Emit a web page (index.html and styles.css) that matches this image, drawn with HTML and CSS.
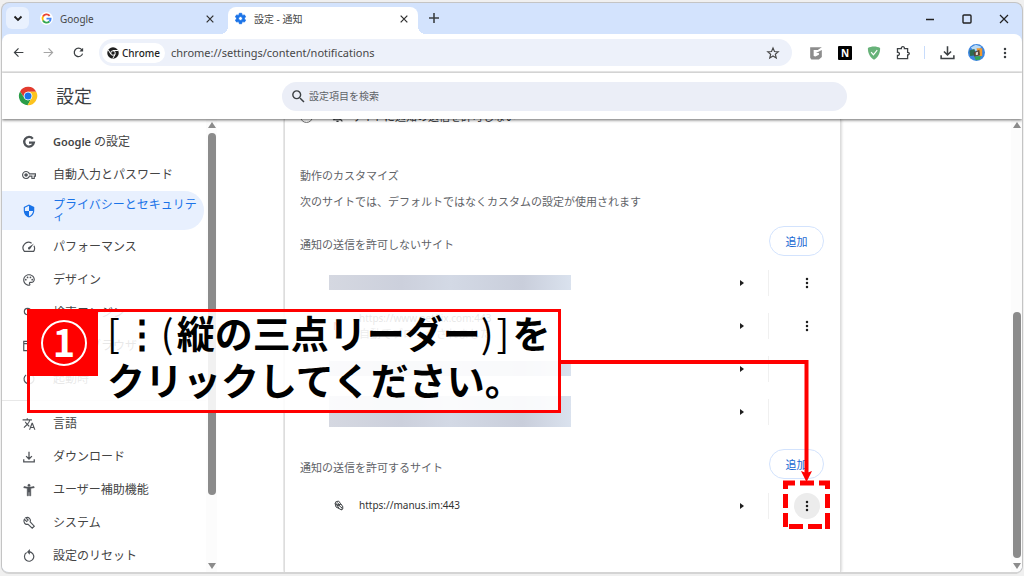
FILE: index.html
```html
<!DOCTYPE html>
<html lang="ja">
  <head>
    <meta charset="UTF-8" />
    <meta name="viewport" content="width=device-width, initial-scale=1.0" />
    <title>設定 - 通知</title>
    <link rel="stylesheet" href="styles.css">
  </head>
  <body>
    <!-- Shared icons -->
    <svg class="defs" aria-hidden="true">
      <symbol id="i-close" viewBox="0 0 12 12"><path d="M2 2l8 8M10 2l-8 8" fill="none" stroke="currentColor" stroke-width="1.5" /></symbol>
      <symbol id="i-search" viewBox="0 0 24 24"><path d="M15.5 14h-.79l-.28-.27A6.47 6.47 0 0 0 16 9.5 6.5 6.5 0 1 0 9.5 16c1.61 0 3.09-.59 4.23-1.57l.27.28v.79l5 4.99L20.49 19l-4.99-5zm-6 0C7.01 14 5 11.99 5 9.5S7.01 5 9.5 5 14 7.01 14 9.5 11.99 14 9.5 14z" /></symbol>
      <symbol id="i-download" viewBox="0 0 24 24"><path d="M12 3v12M7 10.500l5 5 5-5M3 16v4.500h18V16" fill="none" stroke="currentColor" stroke-width="2.200" /></symbol>
      <symbol id="i-dots" viewBox="0 0 24 24"><circle cx="12" cy="4" r="2.500" /><circle cx="12" cy="12" r="2.500" /><circle cx="12" cy="20" r="2.500" /></symbol>
      <symbol id="i-chrome-mono" viewBox="0 0 24 24"><circle cx="12" cy="12" r="11.500" /><circle cx="12" cy="12" r="4.500" fill="none" stroke="#fff" stroke-width="2" /><path d="M12 7h10M7.700 14.500L2.700 6M16.300 14.500L11.500 23" stroke="#fff" stroke-width="2" /></symbol>
    </svg>

    <div class="window">
      <!-- Tab strip -->
      <div class="tabstrip">
        <button class="tab-search" aria-label="タブを検索"><svg viewBox="0 0 12 12"><path d="M2.500 4.500L6 8l3.500-3.500" fill="none" stroke="currentColor" stroke-width="1.800" /></svg></button>
        <div class="tab">
          <svg class="favicon" viewBox="0 0 24 24"><circle cx="12" cy="12" r="12" fill="#fff" /><g fill="none" stroke-width="3.500"><path d="M17.800 7A7.500 7.500 0 0 0 5.500 8.300" stroke="#ea4335" /><path d="M5.500 8.300a7.500 7.500 0 0 0 0 7.400" stroke="#fbbc04" /><path d="M5.500 15.700a7.500 7.500 0 0 0 11.800 1.800" stroke="#34a853" /><path d="M17.300 17.500c1.500-1.400 2.200-3.200 2.200-5.200H12" stroke="#4285f4" /></g></svg>
          <span>Google</span>
          <button class="tab-close" aria-label="閉じる"><svg viewBox="0 0 12 12"><use href="#i-close" /></svg></button>
        </div>
        <div class="tab active">
          <svg class="favicon" viewBox="0 0 24 24"><path d="M19.140 12.940c.04-.3.060-.61.060-.94s-.02-.64-.07-.94l2.030-1.580a.49.49 0 0 0 .12-.61l-1.920-3.320a.49.49 0 0 0-.59-.22l-2.390.96c-.5-.38-1.030-.7-1.620-.94l-.36-2.540a.48.48 0 0 0-.48-.41h-3.840a.48.48 0 0 0-.47.41l-.36 2.540c-.59.24-1.130.57-1.620.94l-2.390-.96a.48.48 0 0 0-.59.22L2.740 8.870a.48.48 0 0 0 .12.610l2.030 1.580c-.05.3-.09.63-.09.94s.02.64.07.94l-2.030 1.580a.49.49 0 0 0-.12.610l1.920 3.320c.12.22.37.29.59.22l2.390-.96c.5.38 1.030.7 1.620.94l.36 2.540c.05.24.24.410.48.410h3.840c.24 0 .44-.17.47-.41l.36-2.540c.59-.24 1.130-.56 1.620-.94l2.390.96c.22.080.47 0 .59-.22l1.920-3.320a.48.48 0 0 0-.12-.61zM12 15.600a3.600 3.600 0 1 1 0-7.200 3.600 3.600 0 0 1 0 7.200z" fill="#1a73e8" stroke="#1a73e8" stroke-width="1.500" /></svg>
          <span>設定 - 通知</span>
          <button class="tab-close" aria-label="閉じる"><svg viewBox="0 0 12 12"><use href="#i-close" /></svg></button>
        </div>
        <button class="new-tab" aria-label="新しいタブ"><svg viewBox="0 0 12 12"><path d="M6 1v10M1 6h10" stroke="currentColor" stroke-width="1.600" /></svg></button>
        <div class="window-controls">
          <button aria-label="最小化"><svg viewBox="0 0 12 12"><path d="M2 6.500h8" stroke="currentColor" stroke-width="1.300" /></svg></button>
          <button aria-label="最大化"><svg viewBox="0 0 12 12"><rect x="2" y="2" width="8" height="8" rx="1" fill="none" stroke="currentColor" stroke-width="1.400" /></svg></button>
          <button aria-label="ウィンドウを閉じる"><svg viewBox="0 0 12 12"><path d="M2 2l8 8M10 2l-8 8" stroke="currentColor" stroke-width="1.200" /></svg></button>
        </div>
      </div>

      <!-- Toolbar -->
      <div class="toolbar">
        <div class="nav-buttons">
          <button aria-label="戻る"><svg viewBox="0 0 24 24"><path d="M21 12H5M12 4.500L4.500 12l7.500 7.500" fill="none" stroke="currentColor" stroke-width="2.200" /></svg></button>
          <button aria-label="進む" disabled><svg viewBox="0 0 24 24"><path d="M3 12h16M12 4.500l7.500 7.500-7.500 7.500" fill="none" stroke="currentColor" stroke-width="2.200" /></svg></button>
          <button aria-label="再読み込み"><svg viewBox="0 0 24 24"><path d="M19.500 14A7.800 7.800 0 1 1 18 6.800l1.500 1.700" fill="none" stroke="currentColor" stroke-width="2.300" /><path d="M20.500 3v7h-7z" /></svg></button>
        </div>
        <div class="omnibox">
          <span class="chip"><svg viewBox="0 0 24 24"><use href="#i-chrome-mono" /></svg>Chrome</span>
          <input type="text" aria-label="アドレス" value="chrome://settings/content/notifications" />
          <button aria-label="ブックマーク"><svg viewBox="0 0 24 24"><path d="M12 3.500l2.500 6 6.500.5-5 4.200 1.600 6.300-5.600-3.400-5.600 3.400L8 14.200 3 10l6.500-.5z" fill="none" stroke="currentColor" stroke-width="2" /></svg></button>
        </div>
        <div class="extensions">
          <button aria-label="拡張機能 G"><svg viewBox="0 0 24 24"><path d="M2 2h20l-7 5H8v10l3 1 6-3v-3h-5l10-5v12l-5 4H4l-2-3z" fill="#8d8d8d" /></svg></button>
          <button class="ext-n" aria-label="拡張機能 N">N</button>
          <button aria-label="AdGuard"><svg viewBox="0 0 24 24"><path d="M12 1C8 1 4.500 2 1.500 3.500c0 9 3 15.500 10.500 20 7.500-4.500 10.500-11 10.500-20C19.500 2 16 1 12 1z" fill="#67b279" /><path d="M7 10.500l4 4.500 6.500-8" fill="none" stroke="#fff" stroke-width="2" /></svg></button>
          <button aria-label="拡張機能"><svg viewBox="0 0 24 24"><path d="M2.500 4.500h6.700c-1-4.500 6.200-4.500 5.200 0h5.500v6.500c3.800-.5 3.800 4.500 0 4.200v6.300H2.500v-5.300c4.500.5 4.500-6 0-5.500z" fill="none" stroke="currentColor" stroke-width="2.200" /></svg></button>
          <span class="toolbar-sep"></span>
          <button class="large" aria-label="ダウンロード"><svg viewBox="0 0 24 24"><use href="#i-download" /></svg></button>
          <button class="large" aria-label="プロフィール"><svg viewBox="0 0 24 24"><circle cx="12" cy="12" r="12" fill="#3d86e0" /><path d="M4 5l7-4 8 3-5 5-6 1z" fill="#b9daf5" /><path d="M2 9l7-2 3 9-9 1z" fill="#2e6b50" /><path d="M12 6h8v11h-5z" fill="#f29a2e" /><path d="M8 12l8-4 1 8-8 2z" fill="#5b4436" /><path d="M11 12l3-1v4l-3 1z" fill="#e9dfd5" /><path d="M9 18l9-1-1 5-6 1z" fill="#34a853" /></svg></button>
          <button class="menu-dots" aria-label="メニュー"><svg viewBox="0 0 24 24"><use href="#i-dots" /></svg></button>
        </div>
      </div>

      <!-- Settings header -->
      <header class="settings-header">
        <div class="brand">
          <svg viewBox="0 0 24 24"><path d="M12 7h9.900A11 11 0 0 0 2.500 6.500l5.170 8A5 5 0 0 1 12 7z" fill="#e33b2e" /><path d="M7.670 14.500L2.500 6.500A11 11 0 0 0 11.500 23l4.830-8.500a5 5 0 0 1-8.660 0z" fill="#2a9d48" /><path d="M16.330 14.500L11.500 23A11 11 0 0 0 21.900 7H12a5 5 0 0 1 4.330 7.500z" fill="#fcc31e" /><circle cx="12" cy="12" r="5.200" fill="#fff" /><circle cx="12" cy="12" r="4.200" fill="#1a73e8" /></svg>
          <h1>設定</h1>
        </div>
        <label class="search">
          <svg viewBox="0 0 24 24"><use href="#i-search" /></svg>
          <input type="search" placeholder="設定項目を検索" aria-label="設定項目を検索" />
        </label>
      </header>

      <div class="body">
        <!-- Sidebar -->
        <nav class="sidebar">
          <div class="menu">
            <a href="#"><svg viewBox="0 0 24 24"><path d="M18.500 6.300A8.300 8.300 0 1 0 20.300 13H12" fill="none" stroke="currentColor" stroke-width="4" /></svg><span><b>Google</b> の設定</span></a>
            <a href="#"><svg viewBox="0 0 24 24"><path d="M22 19h-6v-4h-2.680c-1.140 2.420-3.600 4-6.320 4-3.860 0-7-3.140-7-7s3.140-7 7-7c2.720 0 5.170 1.580 6.320 4H24v6h-2v4zm-4-2h2v-4h2v-2H11.940l-.23-.67C11.010 8.340 9.110 7 7 7c-2.760 0-5 2.240-5 5s2.240 5 5 5c2.110 0 4.010-1.340 4.710-3.330l.23-.67H18v4zM7 15c-1.650 0-3-1.350-3-3s1.350-3 3-3 3 1.350 3 3-1.350 3-3 3z" /></svg><span>自動入力とパスワード</span></a>
            <a href="#" class="selected"><svg viewBox="0 0 24 24"><path d="M12 1L3 5v6c0 5.550 3.840 10.740 9 12 5.160-1.260 9-6.450 9-12V5zm0 11h7c-.53 4.120-3.280 7.790-7 8.940V12H5V6.300l7-3.110z" /></svg><span>プライバシーとセキュリティ</span></a>
            <a href="#"><svg viewBox="0 0 24 24"><path d="M16.500 5.500A9.500 9.500 0 0 0 4 19.500h16a9.500 9.500 0 0 0 .5-9.500" fill="none" stroke="currentColor" stroke-width="2" /><path d="M20.500 6l-7 10a2.200 2.200 0 0 1-3-3z" /></svg><span>パフォーマンス</span></a>
            <a href="#"><svg viewBox="0 0 24 24"><path d="M12 22C6.490 22 2 17.510 2 12S6.490 2 12 2s10 4.040 10 9c0 3.310-2.690 6-6 6h-1.770c-.28 0-.5.22-.5.5 0 .12.050.23.130.33.410.47.640 1.060.640 1.670 0 1.380-1.120 2.500-2.500 2.500zm0-18c-4.410 0-8 3.590-8 8s3.590 8 8 8c.28 0 .5-.22.5-.5 0-.16-.08-.28-.14-.35-.41-.46-.63-1.050-.63-1.650 0-1.380 1.120-2.500 2.500-2.500H16c2.210 0 4-1.790 4-4 0-3.860-3.590-7-8-7z" /><circle cx="6.500" cy="11.500" r="1.500" /><circle cx="9.500" cy="7.500" r="1.500" /><circle cx="14.500" cy="7.500" r="1.500" /><circle cx="17.500" cy="11.500" r="1.500" /></svg><span>デザイン</span></a>
            <a href="#"><svg viewBox="0 0 24 24"><use href="#i-search" /></svg><span>検索エンジン</span></a>
            <a href="#"><svg viewBox="0 0 24 24"><path d="M3 4h18v16H3zM3 8h18" fill="none" stroke="currentColor" stroke-width="2" /></svg><span>既定のブラウザ</span></a>
            <a href="#"><svg viewBox="0 0 24 24"><path d="M12 2v10M7 5a8.500 8.500 0 1 0 10 0" fill="none" stroke="currentColor" stroke-width="2" /></svg><span>起動時</span></a>
            <hr />
            <a href="#"><svg viewBox="0 0 24 24"><path d="M12.870 15.070l-2.540-2.510.03-.03c1.740-1.940 2.980-4.170 3.710-6.530H17V4h-7V2H8v2H1v1.990h11.170C11.500 7.920 10.440 9.750 9 11.350 8.070 10.320 7.300 9.190 6.690 8h-2c.73 1.630 1.730 3.170 2.980 4.560l-5.090 5.020L4 19l5-5 3.110 3.110.76-2.040zM18.500 10h-2L12 22h2l1.120-3h4.750L21 22h2l-4.500-12zm-2.620 7l1.620-4.330L19.120 17h-3.240z" /></svg><span>言語</span></a>
            <a href="#"><svg viewBox="0 0 24 24"><use href="#i-download" /></svg><span>ダウンロード</span></a>
            <a href="#"><svg viewBox="0 0 24 24"><path d="M20.500 6c-2.610.7-5.670 1-8.500 1s-5.890-.3-8.500-1L3 8c1.860.5 4 .83 6 1v13h2v-6h2v6h2V9c2-.17 4.140-.5 6-1l-.5-2zM12 6c1.100 0 2-.9 2-2s-.9-2-2-2-2 .9-2 2 .9 2 2 2z" stroke="currentColor" /></svg><span>ユーザー補助機能</span></a>
            <a href="#"><svg viewBox="0 0 24 24"><path d="M4 5.500l4 4 2.500-2.500-4-4c5-2 9.500 2.500 7.500 7l7 7.500-3.500 3.500-7.500-7C5.500 16 1.500 10 4 5.500z" fill="none" stroke="currentColor" stroke-width="2" /></svg><span>システム</span></a>
            <a href="#"><svg viewBox="0 0 24 24"><path d="M8 6.200a8 8 0 1 0 4-1.200h3" fill="none" stroke="currentColor" stroke-width="2" /><path d="M13.500 0v10l-5-5z" /></svg><span>設定のリセット</span></a>
          </div>
          <div class="scrollbar sidebar-scroll"><i class="up"></i><i class="thumb"></i><i class="down"></i></div>
        </nav>

        <!-- Notification settings -->
        <main>
          <section class="card">
            <label class="radio-row">
              <input type="radio" name="notify" />
              <svg viewBox="0 0 24 24"><path d="M4 3l17 18M6 17V11c0-3 2-5.500 6-5.500s6 2.500 6 5.500v6M3.500 18h15M10 21h4" fill="none" stroke="currentColor" stroke-width="2.200" /></svg>
              <span>サイトに通知の送信を許可しない</span>
            </label>
            <h2>動作のカスタマイズ</h2>
            <p>次のサイトでは、デフォルトではなくカスタムの設定が使用されます</p>

            <div class="list-header">
              <h3>通知の送信を許可しないサイト</h3>
              <button class="add">追加</button>
            </div>
            <ul class="sites">
              <li>
                <span class="redacted"></span>
                <button class="arrow" aria-label="詳細"></button>
                <div class="more"><button aria-label="その他の操作"><svg viewBox="0 0 24 24"><use href="#i-dots" /></svg></button></div>
              </li>
              <li>
                <span class="site-icon netflix">N</span>
                <span class="site">https://www.netflix.com:443<small>自動でブロックされました</small></span>
                <button class="arrow" aria-label="詳細"></button>
                <div class="more"><button aria-label="その他の操作"><svg viewBox="0 0 24 24"><use href="#i-dots" /></svg></button></div>
              </li>
              <li>
                <span class="redacted"></span>
                <button class="arrow" aria-label="詳細"></button>
                <div class="more"></div>
              </li>
              <li>
                <span class="redacted tall"></span>
                <button class="arrow" aria-label="詳細"></button>
                <div class="more"></div>
              </li>
            </ul>

            <div class="list-header allowed">
              <h3>通知の送信を許可するサイト</h3>
              <button class="add">追加</button>
            </div>
            <ul class="sites">
              <li>
                <svg class="site-icon" viewBox="0 0 24 24"><g fill="none" stroke="#3c4043" stroke-width="2"><path d="M5 4l6-2 4 5-2 4-6-1zM8 10l8-2 4 6-3 6-5-3zM4 6l2 8 6 3M9 5l3 4M12 11l6 5M17 20l3-3" /></g></svg>
                <span class="site">https://manus.im:443</span>
                <button class="arrow" aria-label="詳細"></button>
                <div class="more"><button class="hover" aria-label="その他の操作"><svg viewBox="0 0 24 24"><use href="#i-dots" /></svg></button></div>
              </li>
            </ul>
          </section>
        </main>
        <div class="scrollbar page-scroll"><i class="up"></i><i class="thumb"></i><i class="down"></i></div>
      </div>
    </div>

    <!-- Step annotation, lies over the window -->
    <svg class="connector" width="260" height="130" viewBox="0 0 260 130">
      <path d="M0 7h245.500v112" fill="none" stroke="#f00" stroke-width="4" />
      <path d="M240 116l5.500 2 5.500-2-5.500 11z" fill="#f00" />
    </svg>
    <svg class="target" width="48" height="50" viewBox="0 0 48 50">
      <path d="M2.500 9V3H12M17 3h14M36 3h8.500v6M2.500 14v14M2.500 33v14M44.500 14v14M44.500 33v16M6 46.500h14M25 46.500h14" fill="none" stroke="#f00" stroke-width="5" />
    </svg>
    <div class="callout">
      <div class="step"><span>1</span></div>
      <p><span class="thin">[</span>⋮<span class="thin">(</span>縦の三点リーダー<span class="thin">)</span><span class="thin">]</span>を<br />クリックしてください。</p>
    </div>
  </body>
</html>
```
FILE: styles.css
```css
* {
  box-sizing: border-box;
}
body {
  margin: 0;
  height: 100vh;
  padding: 2px 1px;
  overflow: hidden;
  position: relative;
  background: #f0f0f0;
  color: #3c4043;
  font-family: "Noto Sans", "Noto Sans CJK JP", sans-serif;
  font-size: 11px;
}
h1,
h2,
h3,
p,
ul {
  margin: 0;
  padding: 0;
  font-weight: 400;
}
button {
  display: flex;
  align-items: center;
  justify-content: center;
  padding: 0;
  border: none;
  background: none;
  color: inherit;
  font: inherit;
}
input {
  border: none;
  background: none;
  padding: 0;
  min-width: 0;
  font: inherit;
  color: inherit;
  outline: none;
}
svg {
  flex: none;
  fill: currentColor;
}
.defs {
  display: none;
}
.window {
  height: 100%;
  display: flex;
  flex-direction: column;
  overflow: hidden;
  border: 1px solid #c4c4c4;
  border-bottom: 2px solid #d4d4d4;
  border-radius: 8px;
  background: #d3e3fd;
}

/* Tab strip */
.tabstrip {
  display: flex;
  height: 31px;
  padding: 4px 0 0 4px;
}
.tab-search {
  width: 23px;
  height: 22px;
  border-radius: 6px;
  background: #e9f1fe;
  color: #1f1f1f;
}
.tab-search svg,
.new-tab svg,
.window-controls svg {
  width: 12px;
  height: 12px;
}
.tab {
  display: flex;
  align-items: center;
  width: 190px;
  height: 23px;
  padding: 0 8px 0 6px;
  color: #474747;
  font-size: 10px;
}
.tab:not(.active) {
  margin-left: 5px;
}
.tab.active {
  position: relative;
  margin-left: 4px;
  height: 27px;
  padding-bottom: 4px;
  border-radius: 8px 8px 0 0;
  background: #fff;
}
/* curved feet of the active tab */
.tab.active::before,
.tab.active::after {
  content: "";
  position: absolute;
  bottom: 0;
  width: 8px;
  height: 8px;
}
.tab.active::before {
  left: -8px;
  background: radial-gradient(circle at 0 0, transparent 8px, #fff 8px);
}
.tab.active::after {
  right: -8px;
  background: radial-gradient(circle at 100% 0, transparent 8px, #fff 8px);
}
.favicon {
  width: 13px;
  height: 13px;
  margin-right: 7px;
}
.tab-close {
  margin-left: auto;
  width: 12px;
  height: 12px;
  color: #333;
}
.tab-close svg {
  width: 10px;
  height: 10px;
}
.new-tab {
  width: 22px;
  height: 22px;
  margin-left: 5px;
}
.window-controls {
  display: flex;
  margin-left: auto;
}
.window-controls button {
  width: 37px;
  height: 24px;
  color: #222;
}

/* Toolbar */
.toolbar {
  display: flex;
  align-items: center;
  height: 39px;
  border-bottom: 2px solid #ebebeb;
  border-radius: 8px 8px 0 0;
  background: #fff;
}
.nav-buttons {
  display: flex;
  padding-left: 1px;
}
.nav-buttons button {
  width: 30px;
}
.nav-buttons svg {
  width: 13px;
  height: 13px;
}
.nav-buttons button:disabled {
  color: #a5a5a5;
}
.omnibox {
  flex: 1;
  display: flex;
  align-items: center;
  height: 27px;
  margin-left: 6px;
  padding: 0 12px 0 3px;
  border-radius: 14px;
  background: #edf1fa;
  color: #474747;
}
.omnibox input {
  flex: 1;
  margin-left: 6px;
}
.omnibox svg {
  width: 14px;
  height: 14px;
}
.chip {
  display: flex;
  align-items: center;
  gap: 3px;
  height: 20px;
  padding: 0 5px;
  border-radius: 10px;
  background: #fff;
  color: #1f1f1f;
  font-size: 10px;
  font-weight: 500;
}
.chip svg {
  width: 12px;
  height: 12px;
}
.extensions {
  display: flex;
  align-items: center;
  gap: 15px;
  margin: 0 10px 0 17px;
}
.extensions button {
  width: 14px;
  height: 14px;
}
.extensions svg {
  width: 14px;
  height: 14px;
}
.extensions .large svg {
  width: 17px;
  height: 17px;
}
.extensions .menu-dots svg {
  width: 12px;
  height: 12px;
}
.extensions .ext-n {
  background: #000;
  color: #fff;
  font-size: 10px;
  font-weight: 700;
  border-radius: 1px;
}
.toolbar-sep {
  width: 1px;
  height: 13px;
  margin-left: -1px;
  background: #c8dcfb;
}

/* Settings header */
.settings-header {
  position: relative;
  z-index: 1;
  display: flex;
  align-items: center;
  height: 46px;
  background: #fff;
  box-shadow: 0 1px 3px rgba(0, 0, 0, 0.6);
}
.brand {
  display: flex;
  align-items: center;
  width: 280px;
  padding-left: 16px;
}
.brand svg {
  width: 20px;
  height: 20px;
}
.brand h1 {
  margin-left: 18px;
  padding-bottom: 3px;
  font-size: 18px;
}
.search {
  display: flex;
  align-items: center;
  width: 565px;
  height: 29px;
  padding: 0 8px;
  border-radius: 15px;
  background: #ebeef7;
}
.search svg {
  width: 17px;
  height: 17px;
}
.search input {
  flex: 1;
  margin-left: 2px;
  font-size: 10px;
}
.search input::placeholder {
  color: #5f6368;
  opacity: 1;
}

/* Body */
.body {
  flex: 1;
  min-height: 0;
  display: flex;
  background: #fff;
}
.sidebar {
  display: flex;
  width: 215px;
  margin-right: 66px;
}
.menu {
  flex: 1;
  min-width: 0;
  padding-top: 6px;
}
.menu a {
  display: flex;
  align-items: center;
  gap: 17px;
  height: 33px;
  margin-right: 2px;
  padding: 0 4px 0 20px;
  border-radius: 0 20px 20px 0;
  color: #444;
  font-size: 12px;
  line-height: 12px;
  text-decoration: none;
}
.menu a svg {
  width: 14px;
  height: 14px;
  color: #4f5358;
}
.menu b {
  font-size: 11px;
  font-weight: 600;
}
.menu .selected {
  height: 39px;
  background: #e8f0fe;
  color: #1a73e8;
}
.menu .selected svg {
  color: #1a73e8;
}
.menu hr {
  margin: 5px 0 6px;
  border: none;
  border-top: 1px solid #e8e8e8;
}
.scrollbar {
  display: flex;
  flex-direction: column;
  align-items: center;
  width: 11px;
  padding: 3px 0;
  background: #fcfcfc;
}
.scrollbar .up,
.scrollbar .down {
  border: 4px solid transparent;
  border-top-width: 0;
  border-bottom: 6px solid #8b8b8b;
}
.scrollbar .down {
  margin-top: auto;
  border-top: 6px solid #8b8b8b;
  border-bottom-width: 0;
}
.scrollbar .thumb {
  width: 8px;
  border-radius: 4px;
  background: #8b8b8b;
}
.sidebar-scroll .thumb {
  height: 81%;
  margin-top: 5px;
}
.page-scroll .thumb {
  height: 55%;
  margin-top: auto;
}
.page-scroll .down {
  margin-top: 5px;
}
main {
  flex: 1;
  min-width: 0;
  display: flex;
  padding-left: 1px;
  overflow: hidden;
}
.card {
  width: 557px;
  border: 1px solid #ddd;
  border-width: 0 1px;
  box-shadow: 0 0 3px rgba(0, 0, 0, 0.25);
  padding-left: 15px;
  background: #fff;
}
.radio-row {
  display: flex;
  align-items: center;
  height: 24px;
  margin-top: -15px;
}
.radio-row input {
  width: 13px;
  height: 13px;
  margin: 0;
}
.radio-row svg {
  width: 13px;
  height: 13px;
  margin: 0 7px 0 18px;
}
h2,
.card p {
  font-size: 11px;
  line-height: 26px;
  color: #5f6368;
}
h2 {
  margin-top: 35px;
}
.list-header {
  display: flex;
  align-items: flex-end;
  justify-content: space-between;
  height: 30px;
  margin: 11px 16px 5px 0;
  color: #5f6368;
}
.allowed {
  margin-top: 16px;
}
h3 {
  font-size: 11px;
  line-height: 22px;
}
.add {
  width: 55px;
  height: 30px;
  border: 1px solid #d3e3fd;
  border-radius: 15px;
  color: #1967d2;
}
.sites {
  list-style: none;
}
.sites li {
  display: flex;
  align-items: center;
  height: 43px;
  padding-left: 29px;
}
.redacted {
  width: 242px;
  height: 15px;
  background: linear-gradient(90deg, #d5d8e1, #ccd0dc 30%, #d3d9e5 50%, #c9cedb 80%, #dae2ee);
}
.redacted.tall {
  height: 31px;
}
.site-icon {
  width: 12px;
  height: 12px;
  margin: 0 14px 0 4px;
}
.netflix {
  color: #e50914;
  font-weight: 700;
  line-height: 12px;
}
.site {
  color: #333;
  font-size: 10px;
  line-height: 15px;
}
.site small {
  display: block;
  font-size: 11px;
  color: #5f6368;
}
.arrow {
  width: 16px;
  height: 16px;
  margin-left: auto;
  margin-right: 18px;
}
.arrow::before {
  content: "";
  border: 3px solid transparent;
  border-left: 4px solid #1f1f1f;
  border-right-width: 0;
}
.more {
  display: flex;
  align-items: center;
  width: 72px;
  height: 26px;
  padding-left: 25px;
  border-left: 1px solid #f0f0f0;
}
.more button {
  width: 26px;
  height: 26px;
  border-radius: 50%;
  color: #1f1f1f;
}
.more .hover {
  background: #ececec;
}
.more svg {
  width: 12px;
  height: 12px;
}

/* Step annotation */
.callout {
  position: absolute;
  left: 27px;
  top: 309px;
  display: flex;
  width: 534px;
  height: 104px;
  border: 3px solid #f00;
  background: rgba(255, 255, 255, 0.88);
}
.step {
  display: flex;
  align-items: center;
  justify-content: center;
  width: 68px;
  height: 64px;
  padding-bottom: 3px;
  background: #f00;
}
.step span {
  width: 46px;
  height: 46px;
  border: 2px solid #fff;
  border-radius: 50%;
  color: #fff;
  font: 700 38px/38px "Noto Sans CJK JP", sans-serif;
  text-align: center;
}
.callout p {
  margin-top: -4px;
  padding-left: 9px;
  color: #000;
  font: 700 38px/47px "Noto Sans CJK JP", sans-serif;
  white-space: nowrap;
}
.callout .thin {
  margin-right: 3px;
  font-weight: 400;
}
.connector {
  position: absolute;
  left: 561px;
  top: 355px;
}
.target {
  position: absolute;
  left: 783px;
  top: 480px;
}
```
